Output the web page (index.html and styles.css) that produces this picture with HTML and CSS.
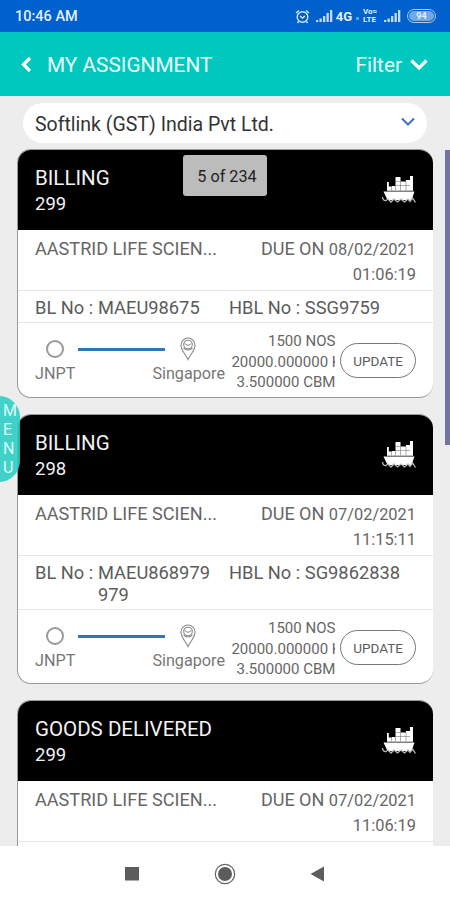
FILE: index.html
```html
<!DOCTYPE html>
<html lang="en">
<head>
  <meta charset="UTF-8">
  <title>My Assignment</title>
  <link rel="stylesheet" href="styles.css">
</head>
<body>
  <svg class="defs" width="0" height="0">
    <symbol id="ship" viewBox="0 0 36 28">
      <path fill="#fff" d="M2.500 16.500h31L30.500 25h-24z"/>
      <path fill="#fff" d="M6 7h1.800v4.500H11v-.5h3.500V2h5v4.500H25V5h4V1h3v14.700H6z"/>
      <path stroke="#777" stroke-width=".6" fill="none" d="M14.500 7v8.500M19.500 6.500v9M25 6.500v9M10.500 11v4.500M14.500 10.500H29M14.500 6.500h5"/>
      <path stroke="#bbb" stroke-width="1.300" fill="none" d="M1.500 22q.5 4 3.500 3.500l2-1.500 3 3 3-3 3.500 3 3.500-3 3.500 3 3.500-3 2 2.500 2.500-3.500 3 4.500"/>
    </symbol>
    <symbol id="pin" viewBox="0 0 16 24">
      <path d="M8 22.500C6.500 18.500 1 14 1 8a7 7 0 0 1 14 0c0 6-5.500 10.500-7 14.500z"/>
      <circle cx="8" cy="7.500" r="4.300"/>
      <path d="M3.500 11Q8 15 12.500 11M5 6.500Q8 10 11 6.500"/>
    </symbol>
    <symbol id="signal" viewBox="0 0 17 14">
      <path d="M0 11h2.300v2H0zM3.500 9.500h2.300V13H3.500zM7 7h2.300v6H7zM10.500 4h2.300v9h-2.300zM14 1h2.300v12H14z"/>
    </symbol>
  </svg>

  <div class="phone">
    <div class="status">
      <span class="time">10:46 AM</span>
      <svg class="alarm" width="15" height="15" viewBox="0 0 15 15">
        <circle cx="7.500" cy="8" r="5.300"/>
        <path d="M1 4l3-2.500M14 4l-3-2.500M5 7l2.500 2L10 7M3.500 12.500l-1 1.500M11.500 12.500l1 1.500"/>
      </svg>
      <svg class="signal" width="17" height="14"><use href="#signal"/></svg>
      <span class="net">4G</span>
      <span class="dot"></span>
      <span class="volte"><span>Vo&#8776;</span><span>LTE</span></span>
      <svg class="signal" width="17" height="14"><use href="#signal"/></svg>
      <span class="battery">94</span>
    </div>

    <div class="topbar">
      <svg width="12" height="17" viewBox="0 0 12 17"><path d="M10 2L3.500 8.500 10 15"/></svg>
      <h1>MY ASSIGNMENT</h1>
      <span class="filter">Filter</span>
      <svg width="18" height="12" viewBox="0 0 18 12"><path d="M1.500 1.500L9 9l7.500-7.500"/></svg>
    </div>

    <div class="content">
      <div class="select">
        <span>Softlink (GST) India Pvt Ltd.</span>
        <svg width="14" height="10" viewBox="0 0 14 10"><path d="M1 1.500l6 6 6-6"/></svg>
      </div>

      <div class="card">
        <div class="card-head">
          <div><h2>BILLING</h2><p>299</p></div>
          <svg class="ship"><use href="#ship"/></svg>
        </div>
        <div class="due">
          <span class="customer">AASTRID LIFE SCIEN...</span>
          <div class="due-date">
            <p>DUE ON <span>08/02/2021</span></p>
            <p class="due-time">01:06:19</p>
          </div>
        </div>
        <div class="numbers">
          <span class="label">BL No :</span>
          <span class="bl">MAEU98675</span>
          <span class="hbl">HBL No : SSG9759</span>
        </div>
        <div class="route">
          <div class="from"><span class="ring"></span><p>JNPT</p></div>
          <div class="line"></div>
          <div class="to"><svg class="pin"><use href="#pin"/></svg><p>Singapore</p></div>
          <div class="cargo">
            <p>1500 NOS</p>
            <p class="weight">20000.000000 K</p>
            <p>3.500000 CBM</p>
          </div>
          <button>UPDATE</button>
        </div>
      </div>

      <div class="card card-tall">
        <div class="card-head">
          <div><h2>BILLING</h2><p>298</p></div>
          <svg class="ship"><use href="#ship"/></svg>
        </div>
        <div class="due">
          <span class="customer">AASTRID LIFE SCIEN...</span>
          <div class="due-date">
            <p>DUE ON <span>07/02/2021</span></p>
            <p class="due-time">11:15:11</p>
          </div>
        </div>
        <div class="numbers">
          <span class="label">BL No :</span>
          <span class="bl">MAEU868979<br>979</span>
          <span class="hbl">HBL No : SG9862838</span>
        </div>
        <div class="route">
          <div class="from"><span class="ring"></span><p>JNPT</p></div>
          <div class="line"></div>
          <div class="to"><svg class="pin"><use href="#pin"/></svg><p>Singapore</p></div>
          <div class="cargo">
            <p>1500 NOS</p>
            <p class="weight">20000.000000 K</p>
            <p>3.500000 CBM</p>
          </div>
          <button>UPDATE</button>
        </div>
      </div>

      <div class="card">
        <div class="card-head">
          <div><h2>GOODS DELIVERED</h2><p>299</p></div>
          <svg class="ship"><use href="#ship"/></svg>
        </div>
        <div class="due">
          <span class="customer">AASTRID LIFE SCIEN...</span>
          <div class="due-date">
            <p>DUE ON <span>07/02/2021</span></p>
            <p class="due-time">11:06:19</p>
          </div>
        </div>
      </div>

      <div class="counter">5 of 234</div>
      <div class="menu-tab"><span>M</span><span>E</span><span>N</span><span>U</span></div>
      <div class="scrollbar"></div>
    </div>

    <div class="navbar">
      <svg width="14" height="14"><rect width="14" height="13.500" fill="#5c5c5c"/></svg>
      <svg width="22" height="22" viewBox="0 0 22 22">
        <circle cx="11" cy="11" r="9.700" fill="none" stroke="#666" stroke-width="1.200"/>
        <circle cx="11" cy="11" r="7" fill="#5c5c5c"/>
      </svg>
      <svg width="14" height="16" viewBox="0 0 14 16"><path d="M14 .5v15L.5 8z" fill="#5c5c5c"/></svg>
    </div>
  </div>
</body>
</html>
```

FILE: styles.css
```css
* {
  box-sizing: border-box;
}
body {
  margin: 0;
  font-family: Roboto, Arial, sans-serif;
  color: #666;
}
h1, h2, p {
  margin: 0;
  font-weight: 400;
}
svg {
  flex: none;
}
.defs {
  position: absolute;
}
.phone {
  width: 450px;
  height: 900px;
  display: flex;
  flex-direction: column;
  overflow: hidden;
  background: #ededed;
}

/* status bar */
.status {
  height: 32px;
  flex: none;
  display: flex;
  align-items: center;
  padding: 0 14px 0 15px;
  background: #0060cc;
  color: #e4f1ff;
}
.time {
  flex: 1;
  font-size: 14.5px;
  font-weight: 500;
}
.alarm {
  fill: none;
  stroke: #d4e8ff;
  stroke-width: 1.4;
  margin-right: 6px;
}
.signal {
  fill: #c4dcf6;
}
.net {
  font-size: 13px;
  font-weight: 700;
  margin-left: 3px;
}
.dot {
  width: 3px;
  height: 3px;
  margin: 4px 4px 0;
  background: #5c9ce4;
}
.volte {
  display: flex;
  flex-direction: column;
  width: 15px;
  margin-right: 6px;
  font-size: 8px;
  line-height: 8px;
  font-weight: 700;
}
.battery {
  width: 29px;
  height: 14px;
  margin-left: 6px;
  border: 1.5px solid #a9cdf5;
  border-radius: 7px;
  background: #6fa9e6;
  background-clip: content-box;
  padding: 1px;
  font-size: 9px;
  line-height: 10px;
  font-weight: 700;
  text-align: center;
}

/* title bar */
.topbar {
  height: 64px;
  flex: none;
  display: flex;
  align-items: center;
  padding: 1px 22px 0 20px;
  background: #00c8bf;
  color: #e9fffc;
}
.topbar svg {
  fill: none;
  stroke: #fff;
  stroke-width: 3.2;
}
.topbar h1 {
  flex: 1;
  margin-left: 15px;
  font-size: 20.8px;
}
.filter {
  font-size: 20.8px;
  margin-right: 8px;
}

.content {
  position: relative;
  height: 750px;
  flex: none;
  padding: 7px 17px 0;
  overflow: hidden;
}
.select {
  display: flex;
  align-items: center;
  justify-content: space-between;
  height: 40px;
  margin: 0 6px 6px;
  padding: 2px 12px 0;
  border-radius: 20px;
  background: #fff;
  color: #333;
  font-size: 19.5px;
}
.select svg {
  fill: none;
  stroke: #3f73b8;
  stroke-width: 2;
  margin-top: -4px;
}

/* assignment card */
.card {
  height: 249px;
  margin-bottom: 16px;
  border: 1px solid #999;
  border-right: 0;
  border-radius: 14px;
  background: #fff;
  overflow: hidden;
}
.card-tall {
  height: 270px;
}
.card-head {
  display: flex;
  justify-content: space-between;
  height: 80px;
  padding: 15px 16px 0 17px;
  background: #000;
  color: #f2f2f2;
}
.card-head h2 {
  font-size: 20.5px;
  line-height: 27px;
}
.card-head p {
  font-size: 18.5px;
  line-height: 25px;
}
.ship {
  width: 36px;
  height: 28px;
  margin-top: 10px;
}
.due {
  display: flex;
  justify-content: space-between;
  height: 61px;
  padding: 6px 17px 0 17px;
  border-bottom: 1px solid #e6e6e6;
}
.customer {
  font-size: 18.1px;
  line-height: 25px;
}
.due-date {
  text-align: right;
  font-size: 18px;
  line-height: 25px;
}
.due-date span, .due-time {
  font-size: 16.4px;
}
.numbers {
  display: flex;
  height: 32px;
  padding: 6px 0 0 17px;
  border-bottom: 1px solid #e6e6e6;
  font-size: 18.3px;
  line-height: 22px;
  color: #5c5c5c;
}
.card-tall .numbers {
  height: 54px;
}
.label {
  width: 63px;
}
.bl {
  width: 131px;
}

.route {
  display: flex;
  padding: 8px 17px 0 17px;
}
.from {
  width: 43px;
}
.from p, .to p {
  font-size: 16.2px;
  line-height: 21px;
  color: #777;
}
.ring {
  display: block;
  width: 18px;
  height: 18px;
  margin: 9px 0 5px 11px;
  border: 2px solid #999;
  border-radius: 50%;
}
.line {
  width: 88px;
  height: 3px;
  margin-top: 17px;
  background: #3474b8;
}
.to {
  width: 66px;
  margin-left: -13px;
}
.pin {
  display: block;
  width: 16px;
  height: 24px;
  margin: 6px 0 2px 28px;
  fill: none;
  stroke: #888;
  stroke-width: 1.1;
}
.cargo {
  width: 104px;
  margin-left: 13px;
  font-size: 15px;
  line-height: 20.5px;
  text-align: right;
}
.weight {
  overflow: hidden;
  white-space: nowrap;
  text-align: left;
}
.route button {
  width: 76px;
  height: 35px;
  margin: 12px 0 0 5px;
  padding: 0;
  border: 1px solid #777;
  border-radius: 18px;
  background: #fff;
  color: #5c5c5c;
  font-family: inherit;
  font-size: 13.5px;
}

/* overlays */
.counter {
  position: absolute;
  left: 183px;
  top: 59px;
  width: 84px;
  height: 41px;
  padding-left: 4px;
  border-radius: 3px;
  background: #bcbcbc;
  color: #222;
  font-size: 16.2px;
  line-height: 43px;
  text-align: center;
}
.menu-tab {
  position: absolute;
  left: -22px;
  top: 300px;
  width: 42px;
  height: 86px;
  padding: 5px 0 0 25px;
  display: flex;
  flex-direction: column;
  border-radius: 21px;
  background: rgba(45, 205, 195, .9);
  color: #dcfffa;
  font-size: 16px;
  line-height: 19px;
}
.scrollbar {
  position: absolute;
  right: 0;
  top: 54px;
  width: 5px;
  height: 295px;
  background: #7474a4;
}

/* system navigation */
.navbar {
  flex: 1;
  display: flex;
  align-items: center;
  justify-content: space-between;
  padding: 1px 126px 0 125px;
  background: #fff;
}
```
